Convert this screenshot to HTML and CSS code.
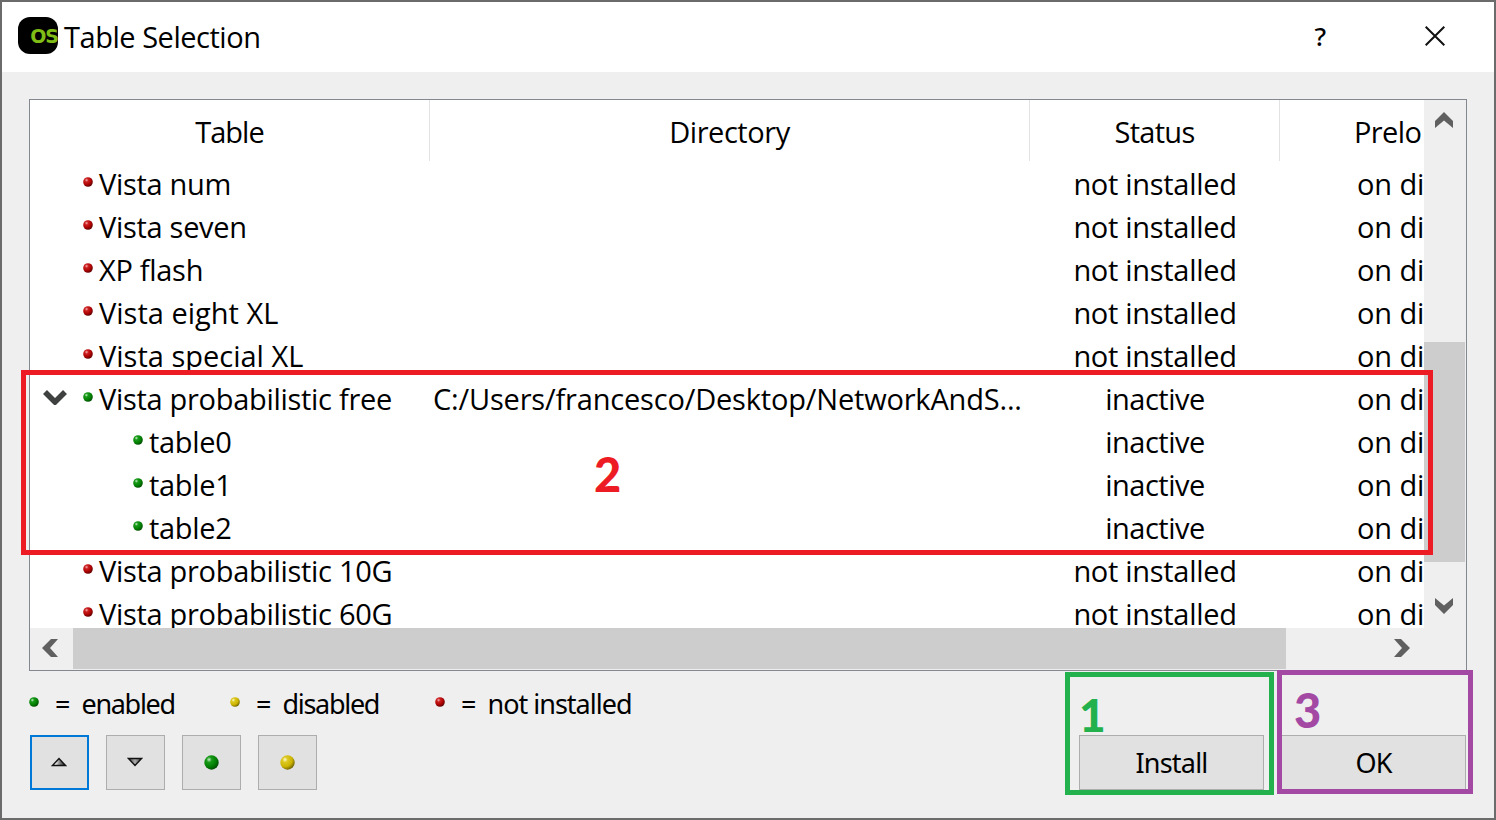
FILE: index.html
```html
<!DOCTYPE html>
<html lang="en">
<head>
<meta charset="utf-8">
<title>Table Selection</title>
<link rel="stylesheet" href="styles.css">
</head>
<body>
<svg class="defs" width="0" height="0">
  <defs>
    <radialGradient id="g-red" cx=".35" cy=".3" r=".75"><stop offset="0" stop-color="#f4b0b0"/><stop offset=".25" stop-color="#cc2020"/><stop offset=".6" stop-color="#b00404"/><stop offset="1" stop-color="#5c0000"/></radialGradient>
    <radialGradient id="g-green" cx=".33" cy=".3" r=".75"><stop offset="0" stop-color="#c8f0c8"/><stop offset=".25" stop-color="#189a18"/><stop offset=".65" stop-color="#028002"/><stop offset="1" stop-color="#014a01"/></radialGradient>
    <radialGradient id="g-yellow" cx=".33" cy=".3" r=".75"><stop offset="0" stop-color="#fffbd0"/><stop offset=".25" stop-color="#dcc820"/><stop offset=".65" stop-color="#ccb400"/><stop offset="1" stop-color="#6e6000"/></radialGradient>
    <linearGradient id="g-up" x1="0" x2="1"><stop offset="0.2" stop-color="#fff"/><stop offset="0.6" stop-color="#777"/><stop offset="1" stop-color="#222"/></linearGradient>
    <linearGradient id="g-down" x1="0" x2="1"><stop offset="0" stop-color="#444"/><stop offset="0.5" stop-color="#aaa"/><stop offset="1" stop-color="#444"/></linearGradient>
    <symbol id="red" viewBox="0 0 10 10"><circle cx="5" cy="5" r="4.8" fill="url(#g-red)"/></symbol>
    <symbol id="green" viewBox="0 0 10 10"><circle cx="5" cy="5" r="4.8" fill="url(#g-green)"/></symbol>
    <symbol id="yellow" viewBox="0 0 10 10"><circle cx="5" cy="5" r="4.8" fill="url(#g-yellow)"/></symbol>
  </defs>
</svg>
<div class="window">
  <header class="titlebar">
    <div class="logo"><span>OS</span></div>
    <h1 class="title">Table Selection</h1>
    <span class="help">?</span>
    <svg class="close" width="20" height="20" viewBox="0 0 20 20"><path d="M.7.7l18.6 18.6M19.3.7L.7 19.3" stroke="#111" stroke-width="2" fill="none"/></svg>
  </header>
  <main class="content">
    <div class="tree">
      <div class="view">
        <div class="row head"><div class="cell h1">Table</div><div class="cell h2">Directory</div><div class="cell h3">Status</div><div class="cell h4">Prelo</div></div>
        <div class="row"><div class="name"><svg class="dot"><use href="#red"/></svg>Vista num</div><div class="dir"></div><div class="status">not installed</div><div class="pre">on di</div></div>
        <div class="row"><div class="name"><svg class="dot"><use href="#red"/></svg>Vista seven</div><div class="dir"></div><div class="status">not installed</div><div class="pre">on di</div></div>
        <div class="row"><div class="name"><svg class="dot"><use href="#red"/></svg>XP flash</div><div class="dir"></div><div class="status">not installed</div><div class="pre">on di</div></div>
        <div class="row"><div class="name xl"><svg class="dot"><use href="#red"/></svg>Vista eight XL</div><div class="dir"></div><div class="status">not installed</div><div class="pre">on di</div></div>
        <div class="row"><div class="name xl"><svg class="dot"><use href="#red"/></svg>Vista special XL</div><div class="dir"></div><div class="status">not installed</div><div class="pre">on di</div></div>
        <div class="row"><div class="name open"><svg class="expander" width="24" height="15" viewBox="0 0 24 15"><path d="M2 2l10 10L22 2" fill="none" stroke="#3f4040" stroke-width="5.600"/></svg><svg class="dot"><use href="#green"/></svg>Vista probabilistic free</div><div class="dir">C:/Users/francesco/Desktop/NetworkAndS...</div><div class="status inactive">inactive</div><div class="pre">on di</div></div>
        <div class="row"><div class="name child"><svg class="dot"><use href="#green"/></svg>table0</div><div class="dir"></div><div class="status inactive">inactive</div><div class="pre">on di</div></div>
        <div class="row"><div class="name child"><svg class="dot"><use href="#green"/></svg>table1</div><div class="dir"></div><div class="status inactive">inactive</div><div class="pre">on di</div></div>
        <div class="row"><div class="name child"><svg class="dot"><use href="#green"/></svg>table2</div><div class="dir"></div><div class="status inactive">inactive</div><div class="pre">on di</div></div>
        <div class="row"><div class="name"><svg class="dot"><use href="#red"/></svg>Vista probabilistic 10G</div><div class="dir"></div><div class="status">not installed</div><div class="pre">on di</div></div>
        <div class="row"><div class="name"><svg class="dot"><use href="#red"/></svg>Vista probabilistic 60G</div><div class="dir"></div><div class="status">not installed</div><div class="pre">on di</div></div>
      </div>
      <div class="vbar">
        <svg width="18" height="16" viewBox="0 0 18 16"><path d="M0 9L9 0l9 9v7L9 8.500 0 16z" fill="#606060"/></svg>
        <div class="vthumb"></div>
        <svg width="18" height="16" viewBox="0 0 18 16"><path d="M0 7l9 9 9-9V0L9 7.500 0 0z" fill="#606060"/></svg>
      </div>
      <div class="hbar">
        <svg width="16" height="18" viewBox="0 0 16 18"><path d="M9 0L0 9l9 9h7L8 9l8-9z" fill="#606060"/></svg>
        <div class="hthumb"></div>
        <svg width="16" height="18" viewBox="0 0 16 18"><path d="M7 0l9 9-9 9H0l8-9-8-9z" fill="#606060"/></svg>
      </div>
    </div>
    <div class="legend">
      <div class="key"><svg class="dot"><use href="#green"/></svg><b>=</b><span class="tight">enabled</span></div>
      <div class="key"><svg class="dot"><use href="#yellow"/></svg><b>=</b><span class="tight">disabled</span></div>
      <div class="key"><svg class="dot"><use href="#red"/></svg><b>=</b><span>not installed</span></div>
    </div>
    <div class="actions">
      <button class="tool focus"><svg width="16" height="10" viewBox="0 0 16 10"><path d="M1.500 8.500L8 1.500l6.500 7z" fill="url(#g-up)" stroke="#111" stroke-width="1.4"/></svg></button>
      <button class="tool"><svg width="16" height="10" viewBox="0 0 16 10"><path d="M1.500 1.500L8 8.500l6.500-7z" fill="url(#g-down)" stroke="#111" stroke-width="1.4"/></svg></button>
      <button class="tool"><svg width="15" height="15"><use href="#green"/></svg></button>
      <button class="tool"><svg width="15" height="15"><use href="#yellow"/></svg></button>
      <button class="push install">Install</button>
      <button class="push ok">OK</button>
    </div>
  </main>
</div>
<div class="mark red"><span>2</span></div>
<div class="mark green"><span>1</span></div>
<div class="mark purple"><span>3</span></div>
</body>
</html>
```
FILE: styles.css
```css
* { box-sizing: border-box; }
body {
  margin: 0;
  height: 820px;
  overflow: hidden;
  position: relative;
  color: #000;
  font: 29px "Open Sans", "Noto Sans", sans-serif;
}
svg { flex: none; display: block; }
.defs { position: absolute; }
.window { height: 820px; border: 2px solid #6b6b6b; background: #efefef; }
.titlebar { display: flex; align-items: center; height: 70px; background: #fff; padding: 0 49px 0 16px; }
.logo {
  width: 40px; height: 37px; margin-top: -4px; padding-top: 1px;
  border-radius: 12px; background: #000; overflow: hidden;
  display: flex; align-items: center; justify-content: flex-end;
  color: #80bc16; font: 700 19px "DejaVu Sans", sans-serif; letter-spacing: -1px;
}
.title { margin: -2px 0 0 6px; font-size: 29px; font-weight: 400; letter-spacing: -0.47px; flex: 1; }
.help { font: 500 26px "Noto Sans", sans-serif; margin: -3px 99px 0 0; }
.close { margin-top: -2px; }
.content { padding: 27px 27px 0; }
.tree {
  display: grid;
  grid-template: 528px 42px / 1394px 42px;
  width: 1438px; height: 572px;
  border: 1px solid #828790;
  background: #efefef;
}
.view { background: #fff; overflow: hidden; }
.row { display: grid; grid-template-columns: 400px 600px 250px 144px; height: 43px; line-height: 42px; white-space: nowrap; letter-spacing: -0.3px; }
.row > div { padding-top: 2px; }
.row.head { height: 61px; line-height: 57px; text-align: center; }
.head .cell { height: 61px; border-right: 1px solid #e2e2e2; }
.row.head > .cell { padding-top: 3px; }
.head .h1 { letter-spacing: -1px; }
.head .h2 { letter-spacing: -0.45px; }
.head .h3 { letter-spacing: -0.7px; }
.head .h4 { letter-spacing: -0.6px; text-align: left; padding-left: 74px; border-right: 0; }
.row .name { display: flex; align-items: center; padding-left: 53px; }
.row .open { padding-left: 13px; }
.row .child { padding-left: 103px; }
.row .xl { letter-spacing: 0; }
.dot { width: 10px; height: 10px; }
.name .dot { margin: -5px 6px 0 0; }
.expander { margin: -3px 16px 0 0; }
.row .dir { padding-left: 3px; letter-spacing: -0.18px; }
.status { text-align: center; }
.row .inactive { letter-spacing: -0.5px; }
.row .pre { padding-left: 77px; letter-spacing: -0.1px; }
.vbar { display: flex; flex-direction: column; align-items: center; padding: 12px 3px 14px 0; }
.vbar svg:last-child { margin-top: auto; }
.vthumb { width: 41px; height: 220px; background: #cdcdcd; margin: 214px -1px 0 0; }
.hbar { display: flex; align-items: center; width: 1394px; padding: 0 14px 2px 12px; }
.hthumb { width: 1213px; height: 41px; background: #cdcdcd; margin: 0 auto 0 15px; }
.legend { display: flex; height: 64px; align-items: center; font: 27px "Noto Sans", sans-serif; letter-spacing: -1px; }
.key { display: flex; align-items: center; width: 201px; white-space: nowrap; }
.key:nth-child(2) { width: 205px; }
.key .dot { margin-top: -2px; }
.key b { font-weight: 400; margin: 0 11px 0 16px; letter-spacing: 0; }
.tight { letter-spacing: -1.3px; }
.actions { display: flex; padding-left: 1px; }
.tool, .push { height: 55px; padding: 0; border: 1px solid #adadad; background: #e1e1e1; display: flex; align-items: center; justify-content: center; }
.tool { width: 59px; margin-right: 17px; padding: 0 1px 1px 0; }
.focus { border: 2px solid #0078d7; }
.push { width: 185px; color: #000; font: 27px "Noto Sans", sans-serif; letter-spacing: -0.8px; }
.install { margin-left: 745px; }
.ok { margin-left: 17px; }
.mark { position: absolute; border: 5px solid; font: 900 47px/47px Lato, sans-serif; }
.mark span { position: absolute; }
.mark.red { left: 21px; top: 370px; width: 1412px; height: 185px; color: #ed1c24; }
.red span { left: 568px; top: 76px; }
.mark.green { left: 1065px; top: 672px; width: 209px; height: 123px; color: #22b14c; font-size: 46px; }
.green span { left: 9px; top: 14px; }
.mark.purple { left: 1277px; top: 670px; width: 196px; height: 124px; color: #a349a4; }
.purple span { left: 12px; top: 12px; }
```
